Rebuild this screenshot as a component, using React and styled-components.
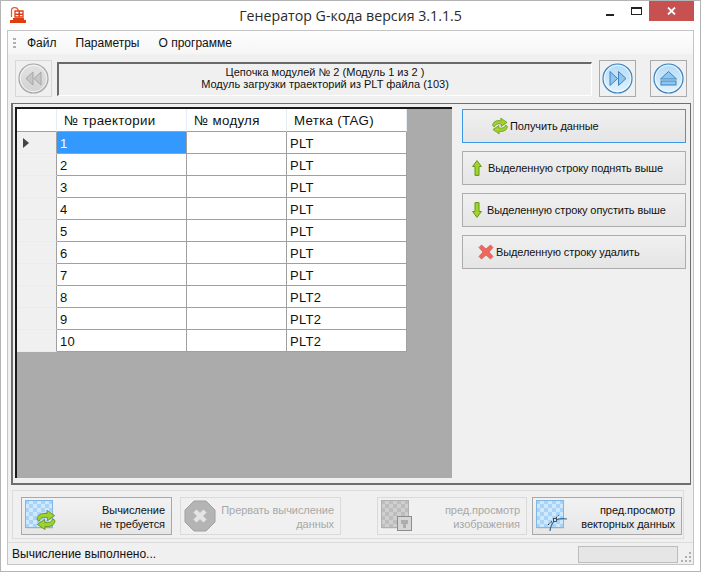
import React from "react";
import styled, { createGlobalStyle, css } from "styled-components";

const Global = createGlobalStyle`
  html, body { margin: 0; padding: 0; background: #fff; }
  body { font-family: "Liberation Sans", Arial, sans-serif; font-size: 11px; color: #000; }
  * { box-sizing: border-box; }
`;

const Win = styled.div`
  width: 701px;
  height: 572px;
  border: 1px solid #b4b4b4;
  background: #fff;
  display: flex;
  flex-direction: column;
  padding: 0 6px 6px;
`;
const TitleBar = styled.div`
  height: 29px;
  flex: none;
  display: flex;
  align-items: flex-start;
  position: relative;
`;
const Logo = styled.div`
  margin: 5px 0 0 3px;
  width: 18px;
  height: 18px;
`;
const Title = styled.div`
  position: absolute;
  left: 0;
  right: 0;
  top: 5px;
  text-align: center;
  font-family: "Open Sans", sans-serif;
  font-size: 14.2px;
  color: #2b2b2b;
`;
const WinBtns = styled.div`
  margin-left: auto;
  display: flex;
  height: 20px;
`;
const WinBtn = styled.div`
  width: 26px;
  display: flex;
  align-items: center;
  justify-content: center;
  ${(p) => p.$min && css`align-items: flex-end; padding-bottom: 5px;`}
  ${(p) => p.$wide && css`width: 45px; background: #c75050;`}
`;
const Client = styled.div`
  flex: 1;
  min-height: 0;
  border: 1px solid #c4c4c4;
  background: #f0f0f0;
  display: flex;
  flex-direction: column;
`;
const Menu = styled.div`
  height: 23px;
  flex: none;
  background: linear-gradient(#fdfdfd, #f6f6f6);
  display: flex;
  align-items: center;
  padding-left: 5px;
`;
const Grip = styled.div`
  width: 3px;
  height: 10px;
  margin-right: 11px;
  background: repeating-linear-gradient(#b0b0b0 0 2px, transparent 2px 4px);
`;
const MenuItem = styled.div`
  font-size: 12px;
  margin-right: 19px;
  color: #111;
`;
const NavRow = styled.div`
  height: 49px;
  flex: none;
  display: flex;
  align-items: flex-start;
  padding: 6px 6px 0 7px;
`;
const RoundBtn = styled.div`
  width: 37px;
  height: 37px;
  border: 1px solid ${(p) => (p.$off ? "#d8d8d8" : "#aaa")};
  display: flex;
  align-items: center;
  justify-content: center;
  flex: none;
  margin-left: ${(p) => p.$gap || 0}px;
`;
const Info = styled.div`
  width: 535px;
  height: 34px;
  margin: 2px 0 0 5px;
  border: 1px solid;
  border-color: #696969 #fff #fff #696969;
  border-width: 2px 1px 1px 2px;
  background: #f0f0f0;
  text-align: center;
  line-height: 12px;
  padding-top: 2px;
  flex: none;
  color: #111;
`;
const Main = styled.div`
  height: 382px;
  flex: none;
  margin: 0 2px 0 3px;
  border: 1px solid #6e6e6e;
  border-bottom-width: 2px;
  border-left-width: 2px;
  display: flex;
  padding: 3px 4px 5px 2px;
`;
const Table = styled.div`
  width: 437px;
  background: #ababab;
  border-top: 2px solid #1a1a1a;
  border-left: 2px solid #1a1a1a;
  align-self: stretch;
  display: grid;
  grid-template-columns: 40px 130px 100px 120px;
  grid-template-rows: 23px;
  grid-auto-rows: 22px;
  align-content: start;
`;
const Head = styled.div`
  background: #fff;
  border-right: 1px solid #e3eef9;
  border-bottom: 1px solid #a0a0a0;
  font-size: 13.3px;
  line-height: 22px;
  padding: 1px 0 0 7px;
  color: #111;
  letter-spacing: 0.3px;
`;
const RowHead = styled.div`
  background: #f0f0f0;
  border-bottom: 1px solid #e3eef9;
  border-right: 1px solid #a0a0a0;
  display: flex;
  align-items: center;
  padding-left: 6px;
`;
const Cell = styled.div`
  background: ${(p) => (p.$sel ? "#3399ff" : "#fff")};
  color: ${(p) => (p.$sel ? "#fff" : "#111")};
  border-right: 1px solid #a0a0a0;
  border-bottom: 1px solid #a0a0a0;
  font-size: 13px;
  line-height: 22px;
  padding: 1px 0 0 3px;
  letter-spacing: 0.3px;
`;
const Side = styled.div`
  margin-left: 10px;
  width: 224px;
  display: flex;
  flex-direction: column;
  gap: 8px;
  padding-top: 2px;
`;
const SideBtn = styled.div`
  height: 34px;
  border: 1px solid ${(p) => (p.$focus ? "#3c97e8" : "#adadad")};
  background: linear-gradient(#f0f0f0, #e5e5e5);
  display: flex;
  align-items: center;
  padding-left: ${(p) => p.$pad}px;
  gap: ${(p) => p.$gap}px;
  color: #111;
  letter-spacing: -0.1px;
`;
const Tools = styled.div`
  height: 49px;
  flex: none;
  margin: 5px 9px 0 4px;
  border: 1px solid #dcdcdc;
  display: flex;
  padding: 6px 0 0 8px;
`;
const ToolBtn = styled.div`
  width: ${(p) => p.$w}px;
  height: 38px;
  margin-left: ${(p) => p.$ml || 0}px;
  border: 1px solid ${(p) => (p.$off ? "#dadada" : "#a8a8a8")};
  background: ${(p) => (p.$off ? "#f0f0f0" : "linear-gradient(#f2f2f2, #e6e6e6)")};
  color: ${(p) => (p.$off ? "#a8a8a8" : "#111")};
  display: flex;
  align-items: flex-start;
  justify-content: space-between;
  padding: 2px 6px 0 3px;
  flex: none;
`;
const ToolText = styled.div`
  text-align: right;
  line-height: 14px;
  padding-top: 3px;
  letter-spacing: -0.05px;
`;
const Status = styled.div`
  flex: 1;
  border-top: 1px solid #dcdcdc;
  margin-top: 3px;
  display: flex;
  align-items: flex-start;
  padding: 2px 0 0 4px;
  position: relative;
`;
const StatusText = styled.div`
  font-size: 12px;
  line-height: 18px;
  color: #111;
`;
const Progress = styled.div`
  margin: 1px 15px 0 auto;
  width: 100px;
  height: 17px;
  border: 1px solid #bcbcbc;
  background: #e6e6e6;
`;
const SizeGrip = styled.svg`
  position: absolute;
  right: 1px;
  bottom: 1px;
`;

const SyncShape = () => (
  <>
    <path d="M1 10.5C1.2 6 5.5 3.6 11 4.6V1.4L18.6 6.6L11.4 11.6V8.6C7.5 7.8 4.4 8.6 3 12.2Z" fill="#a3d02e" stroke="#5f9614" strokeWidth="0.9" strokeLinejoin="round" />
    <path d="M19 11.5C18.8 16 14.5 18.4 9 17.4V20.6L1.4 15.4L8.6 10.4V13.4C12.5 14.2 15.6 13.4 17 9.8Z" fill="#a3d02e" stroke="#5f9614" strokeWidth="0.9" strokeLinejoin="round" />
  </>
);
const Sync = ({ s = 20 }) => (
  <svg width={s} height={s} viewBox="0 0 20 22"><SyncShape /></svg>
);

const Orb = ({ off, children }) => (
  <svg width="31" height="31" viewBox="0 0 31 31">
    <defs>
      <linearGradient id={off ? "og" : "ob"} x1="0" y1="0" x2="0" y2="1">
        <stop offset="0" stopColor={off ? "#e2e2e2" : "#b4dbf7"} />
        <stop offset="1" stopColor={off ? "#d2d2d2" : "#e2f3fe"} />
      </linearGradient>
    </defs>
    <circle cx="15.5" cy="15.5" r="14.5" fill={`url(#${off ? "og" : "ob"})`} stroke={off ? "#a6a6a6" : "#3f82bd"} strokeWidth="1.2" />
    <circle cx="15.5" cy="15.5" r="13.2" fill="none" stroke="#fff" strokeOpacity="0.7" />
    {children}
  </svg>
);

const ArrowUp = () => (
  <svg width="10" height="16" viewBox="0 0 10 16">
    <path d="M5 .6L9.4 6.5H7V15.4H3V6.5H.6Z" fill="#a6d12f" stroke="#5f9a16" strokeLinejoin="round" />
  </svg>
);
const ArrowDown = () => (
  <svg width="10" height="16" viewBox="0 0 10 16">
    <path d="M5 15.4L9.4 9.5H7V.6H3V9.5H.6Z" fill="#a6d12f" stroke="#5f9a16" strokeLinejoin="round" />
  </svg>
);
const Cross = () => (
  <svg width="16" height="16" viewBox="0 0 16 16">
    <path d="M3.5 1L8 5L12.5 1L15 3.5L11 8L15 12.5L12.5 15L8 11L3.5 15L1 12.5L5 8L1 3.5Z" fill="#f0675c" stroke="#c9655c" strokeWidth="0.8" strokeLinejoin="round" />
  </svg>
);

const Checker = ({ off, id }) => (
  <>
    <defs>
      <pattern id={id} width="8" height="8" patternUnits="userSpaceOnUse">
        <rect width="8" height="8" fill={off ? "#cfcfcf" : "#cfe8fd"} />
        <rect width="4" height="4" fill={off ? "#bdbdbd" : "#a8d4fa"} />
        <rect x="4" y="4" width="4" height="4" fill={off ? "#bdbdbd" : "#a8d4fa"} />
      </pattern>
    </defs>
    <rect x="1" y="1.5" width="27" height="27" fill="#000" fillOpacity="0.12" />
    <rect x=".5" y=".5" width="27" height="27" fill={`url(#${id})`} stroke={off ? "#b0b0b0" : "#7fb6e6"} />
  </>
);

const rows = ["PLT", "PLT", "PLT", "PLT", "PLT", "PLT", "PLT", "PLT2", "PLT2", "PLT2"];

export default function App() {
  return (
    <>
      <Global />
      <Win>
        <TitleBar>
          <Logo>
            <svg width="18" height="18" viewBox="0 0 18 18">
              <path d="M1.5 11V4C1.5 1.2 7 .6 8 3.5V6" fill="none" stroke="#e8552e" strokeWidth="1.2" />
              <path d="M5 5H13V11H5Z" fill="#fff" stroke="#e03c12" strokeWidth="1.3" />
              <path d="M8.5 5H10V11H8.5ZM5 7.5H13V9H5Z" fill="#e03c12" />
              <path d="M3 12H14V14H16V17H0V14H3Z" fill="#e03c12" />
            </svg>
          </Logo>
          <Title>Генератор G-кода версия 3.1.1.5</Title>
          <WinBtns>
            <WinBtn $min>
              <svg width="8" height="2"><rect width="8" height="2" fill="#222" /></svg>
            </WinBtn>
            <WinBtn>
              <svg width="11" height="8"><rect x=".5" y=".5" width="10" height="7" fill="none" stroke="#222" /><rect width="11" height="2" fill="#222" /></svg>
            </WinBtn>
            <WinBtn $wide>
              <svg width="9" height="8" viewBox="0 0 9 8"><path d="M1 .5L8 7.5M8 .5L1 7.5" stroke="#fff" strokeWidth="1.8" /></svg>
            </WinBtn>
          </WinBtns>
        </TitleBar>
        <Client>
          <Menu>
            <Grip />
            <MenuItem>Файл</MenuItem>
            <MenuItem>Параметры</MenuItem>
            <MenuItem>О программе</MenuItem>
          </Menu>
          <NavRow>
            <RoundBtn $off>
              <Orb off>
                <path d="M15 9V22L8 15.5Z M23 9V22L16 15.5Z" fill="#c6c6c6" stroke="#a6a6a6" strokeLinejoin="round" />
              </Orb>
            </RoundBtn>
            <Info>
              Цепочка модулей № 2 (Модуль 1 из 2 )
              <br />
              Модуль загрузки траекторий из PLT файла (103)
            </Info>
            <RoundBtn $gap={7}>
              <Orb>
                <path d="M8 8.5V22.5L15.5 15.5Z M16.5 8.5V22.5L24 15.5Z" fill="#8fc5ef" stroke="#3f82bd" strokeLinejoin="round" />
              </Orb>
            </RoundBtn>
            <RoundBtn $gap={14}>
              <Orb>
                <path d="M15.5 8.5L23.5 16H7.5Z" fill="#8fc5ef" stroke="#3f82bd" strokeLinejoin="round" />
                <rect x="8" y="18" width="15" height="4" fill="#8fc5ef" stroke="#3f82bd" />
              </Orb>
            </RoundBtn>
          </NavRow>
          <Main>
            <Table>
              <Head />
              <Head>№ траектории</Head>
              <Head>№ модуля</Head>
              <Head>Метка (TAG)</Head>
              {rows.map((tag, i) => (
                <React.Fragment key={i}>
                  <RowHead>
                    {i === 0 && (
                      <svg width="6" height="10" viewBox="0 0 6 10"><path d="M0 0L6 5L0 10Z" fill="#444" /></svg>
                    )}
                  </RowHead>
                  <Cell $sel={i === 0}>{i + 1}</Cell>
                  <Cell />
                  <Cell>{tag}</Cell>
                </React.Fragment>
              ))}
            </Table>
            <Side>
              <SideBtn $focus $pad={28} $gap={1}><Sync s={18} />Получить данные</SideBtn>
              <SideBtn $pad={9} $gap={6}><ArrowUp />Выделенную строку поднять выше</SideBtn>
              <SideBtn $pad={9} $gap={5}><ArrowDown />Выделенную строку опустить выше</SideBtn>
              <SideBtn $pad={15} $gap={2}><Cross />Выделенную строку удалить</SideBtn>
            </Side>
          </Main>
          <Tools>
            <ToolBtn $w={151}>
              <svg width="32" height="32" viewBox="0 0 32 32">
                <Checker id="c1" />
                <g transform="translate(11 9)"><SyncShape /></g>
              </svg>
              <ToolText>Вычисление<br />не требуется</ToolText>
            </ToolBtn>
            <ToolBtn $w={161} $ml={8} $off>
              <svg width="32" height="32" viewBox="0 0 32 32">
                <path d="M10 1H22L31 10V22L22 31H10L1 22V10Z" fill="#b4b4b4" stroke="#a0a0a0" />
                <path d="M11 11L21 21M21 11L11 21" stroke="#e4e4e4" strokeWidth="4.5" />
              </svg>
              <ToolText>Прервать вычисление<br />данных</ToolText>
            </ToolBtn>
            <ToolBtn $w={150} $ml={36} $off>
              <svg width="32" height="32" viewBox="0 0 32 32">
                <Checker off id="c2" />
                <rect x="16.5" y="16.5" width="14" height="14" fill="#d6d6d6" stroke="#8c8c8c" />
                <path d="M20 20H27V24H25V28H22V24H20Z" fill="#aeaeae" />
              </svg>
              <ToolText>пред.просмотр<br />изображения</ToolText>
            </ToolBtn>
            <ToolBtn $w={150} $ml={5}>
              <svg width="32" height="32" viewBox="0 0 32 32">
                <Checker id="c3" />
                <path d="M14 31C15 22 20 17 31 19" fill="none" stroke="#2a6d9e" strokeWidth="1.2" />
                <path d="M12 25L23 15" stroke="#222" strokeDasharray="2 1.5" />
                <rect x="17.5" y="18.5" width="3" height="3" fill="#ddd" stroke="#333" strokeWidth="0.8" />
              </svg>
              <ToolText>пред.просмотр<br />векторных данных</ToolText>
            </ToolBtn>
          </Tools>
          <Status>
            <StatusText>Вычисление выполнено...</StatusText>
            <Progress />
            <SizeGrip width="12" height="12" viewBox="0 0 12 12">
              <path d="M9 1h2v2H9zM5 5h2v2H5zM9 5h2v2H9zM1 9h2v2H1zM5 9h2v2H5zM9 9h2v2H9z" fill="#b0b0b0" />
            </SizeGrip>
          </Status>
        </Client>
      </Win>
    </>
  );
}
